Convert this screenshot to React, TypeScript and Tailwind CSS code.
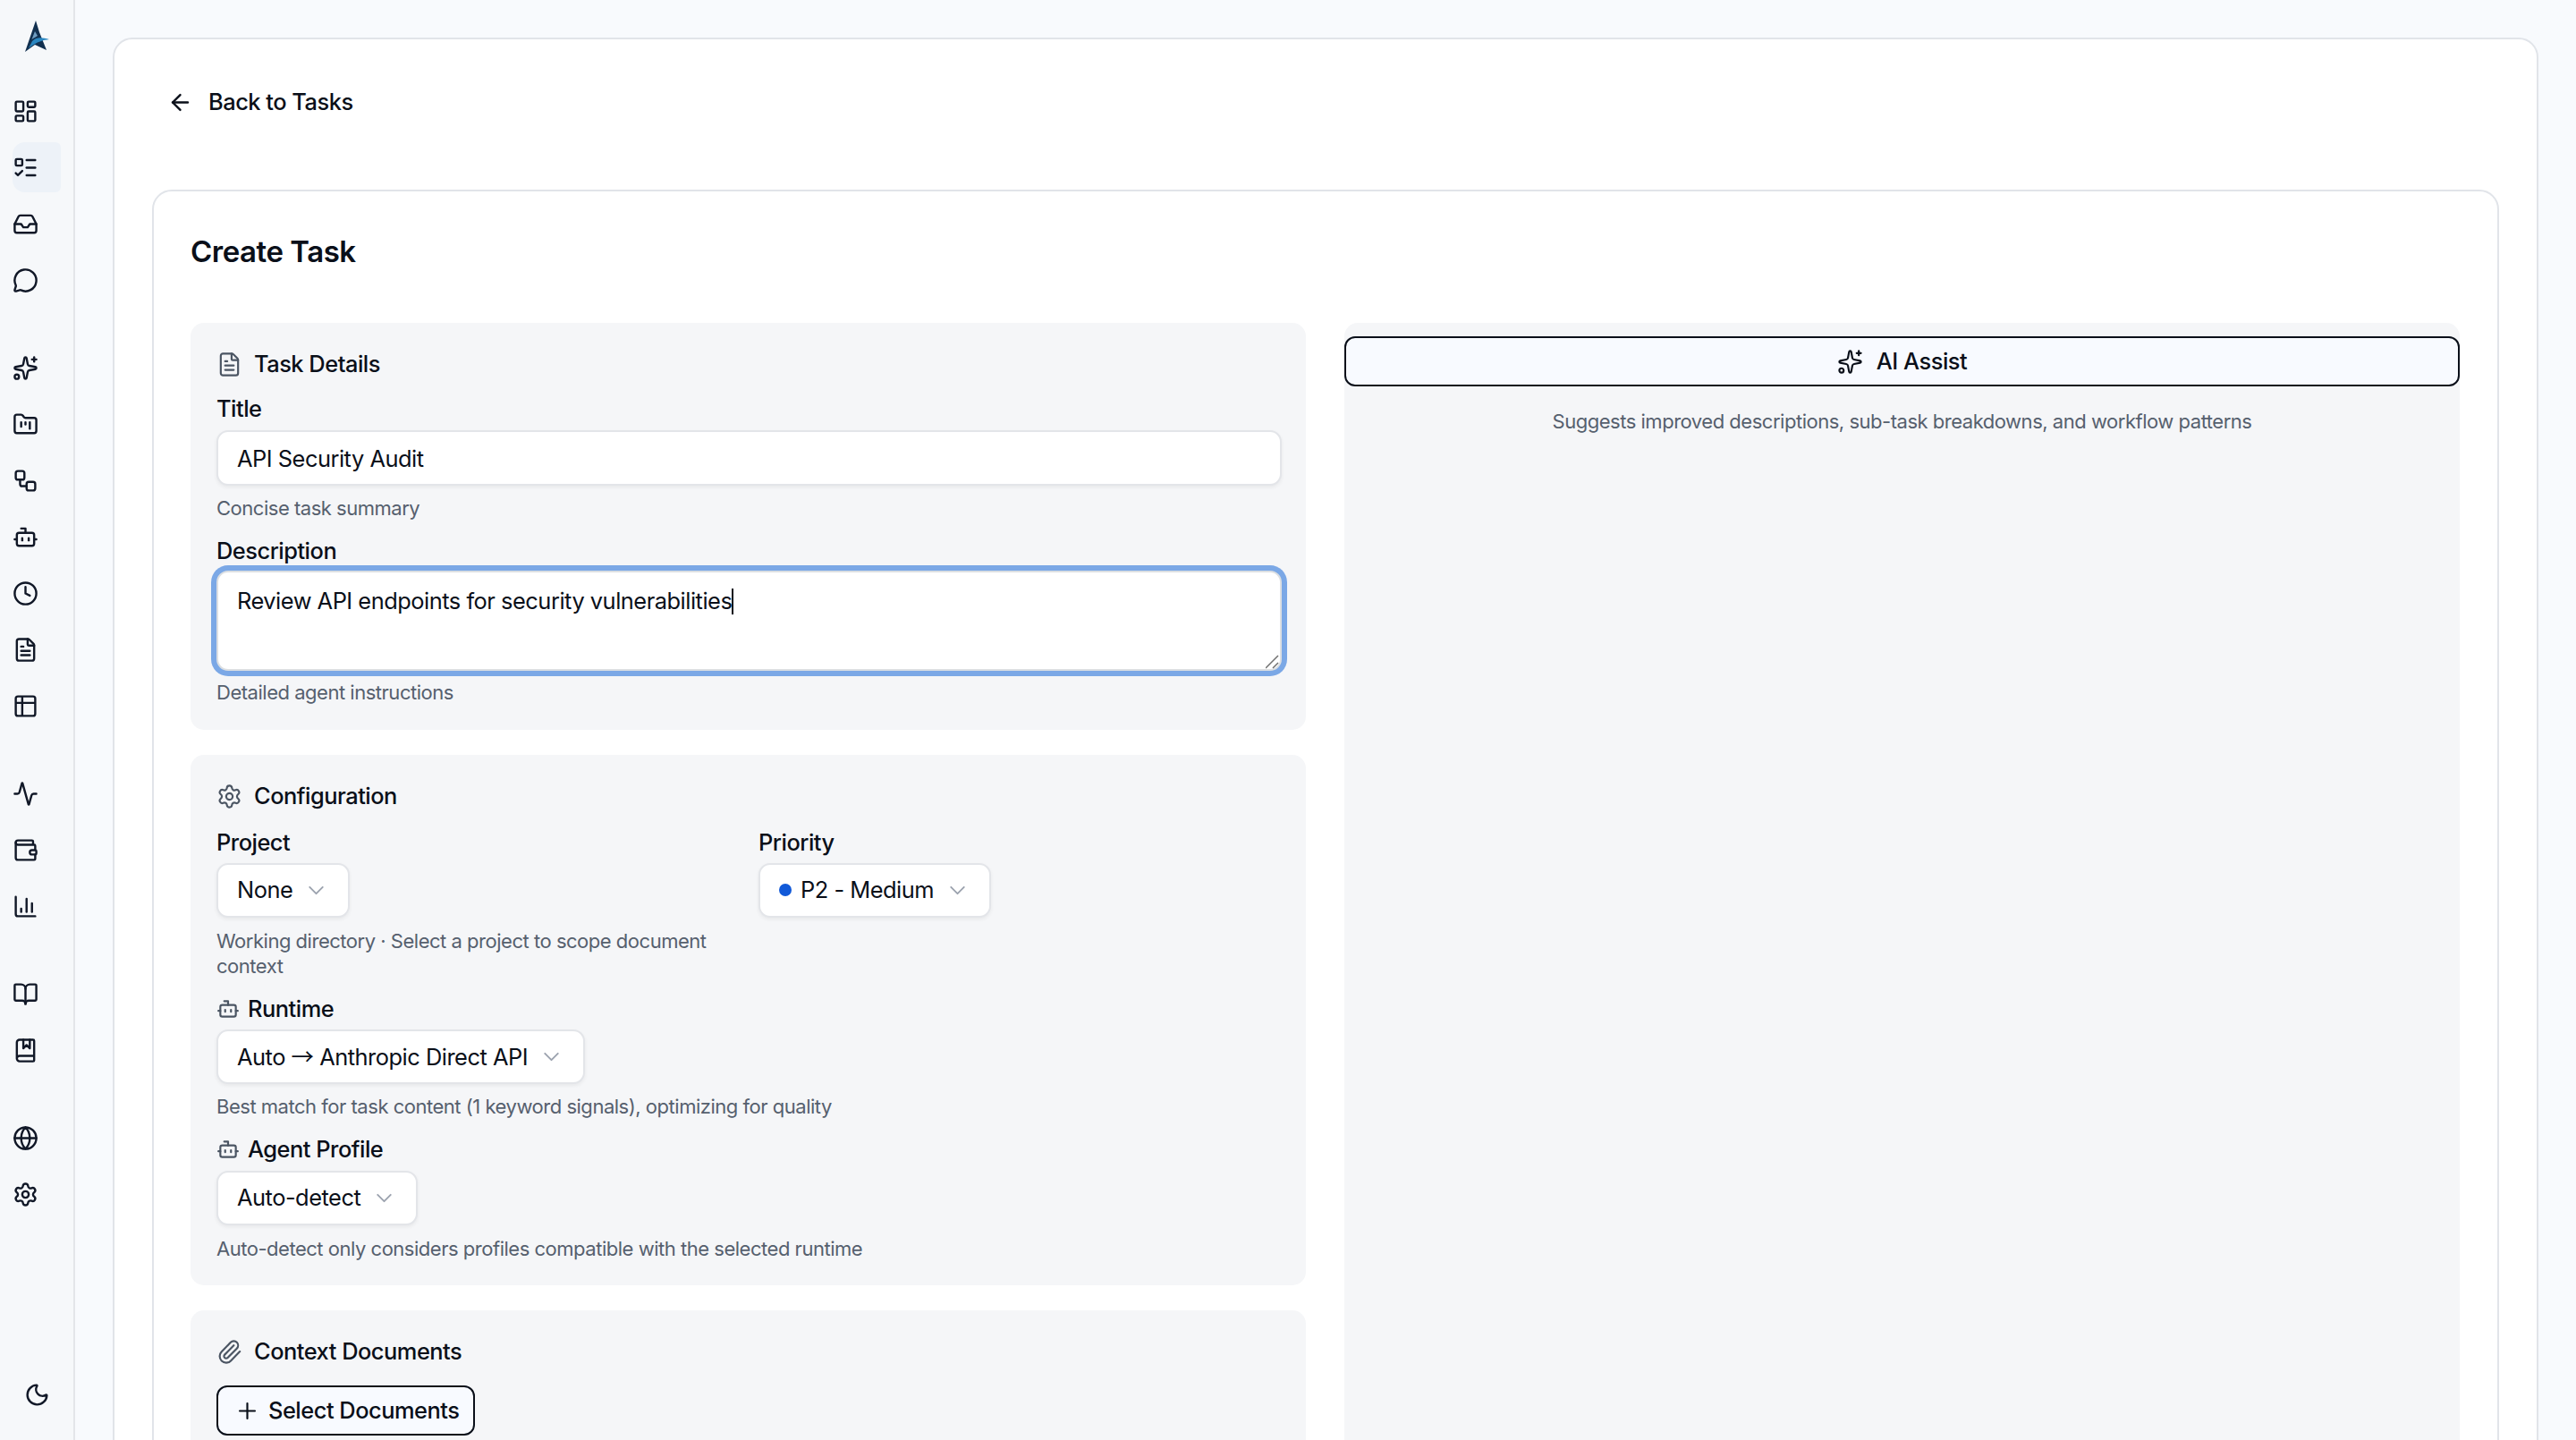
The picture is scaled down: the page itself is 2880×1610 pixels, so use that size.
import React from 'react';
import {
  Activity, ArrowLeft, BookMarked, BookOpen, Bot, ChartColumn, ChevronDown, Clock, FileText, FolderKanban, Globe,
  Inbox, LayoutDashboard, ListTodo, MessageCircle, Moon, Paperclip, Plus, Settings, Sparkles, Table2, Wallet, Workflow,
} from 'lucide-react';

const NAV_GROUPS = [
  [LayoutDashboard, ListTodo, Inbox, MessageCircle],
  [Sparkles, FolderKanban, Workflow, Bot, Clock, FileText, Table2],
  [Activity, Wallet, ChartColumn],
  [BookOpen, BookMarked],
  [Globe, Settings],
];

const Sidebar: React.FC = () => (
  <aside className="w-[84px] shrink-0 h-full bg-[#f6f8fa] border-r-2 border-[#e3e5e9] flex flex-col">
    {/* Logo */}
    <div className="h-[96px] pl-[26px] pt-[22px]">
      <svg width="30" height="38" viewBox="0 0 30 38">
        <path d="M14 1 L2 36 L13 28 L26 34 L18 14 Z" fill="#12304f" />
        <path d="M13 13 L9.5 22 C12 20 15 19 16 18 Z" fill="#6f9cc0" />
        <path d="M10 24 C15 19 21 20 29 22 C22 23 16 24 6 32 Z" fill="#2a86c0" />
      </svg>
    </div>
    <nav className="flex flex-col gap-[42px] pl-[14px]">
      {NAV_GROUPS.map((group, i) => (
        <div key={i} className="flex flex-col gap-[7px]">
          {group.map((Icon, j) => (
            <div
              key={j}
              className={`w-[54px] h-[56px] flex items-center text-[#111827] ${
                Icon === ListTodo ? 'bg-[#edf2f8] rounded-l-[14px] rounded-r-[6px]' : ''
              }`}
            >
              <Icon size={29} />
            </div>
          ))}
        </div>
      ))}
    </nav>
    <div className="mt-auto pl-[27px] pb-[36px] text-[#111827]">
      <Moon size={29} />
    </div>
  </aside>
);

const Heading: React.FC<{ icon: React.ElementType; children: React.ReactNode }> = ({ icon: Icon, children }) => (
  <div className="h-[30px] flex items-center gap-[13px] text-[25.4px] font-medium text-[#0a0f19]">
    <Icon size={29} strokeWidth={1.8} className="text-[#4b5563]" />
    {children}
  </div>
);

const Select: React.FC<{ children: React.ReactNode }> = ({ children }) => (
  <button className="h-[61px] px-[21px] flex items-center gap-[12px] bg-white border-2 border-[#e3e5e9] rounded-[13px] shadow-[0_2px_4px_rgba(0,0,0,0.06)] text-[25.4px] text-[#0a0f19]">
    {children}
    <ChevronDown size={29} strokeWidth={1.6} className="text-[#9ca3af]" />
  </button>
);

const Hint: React.FC<{ children: React.ReactNode; className?: string }> = ({ children, className }) => (
  <p className={`text-[22px] leading-[28px] text-[#56606e] ${className ?? ''}`}>{children}</p>
);

const Label: React.FC<{ children: React.ReactNode; className?: string }> = ({ children, className }) => (
  <div className={`h-[36px] flex items-center text-[25.4px] font-medium text-[#0a0f19] ${className ?? ''}`}>{children}</div>
);

const BotLabel: React.FC<{ children: React.ReactNode; className?: string }> = ({ children, className }) => (
  <Label className={`gap-[9px] ${className ?? ''}`}>
    <Bot size={26} className="text-[#4b5563]" />
    {children}
  </Label>
);

const App: React.FC = () => {
  return (
    <div className="flex h-screen overflow-hidden bg-[#f8fafd] font-[Inter,sans-serif] tracking-[-0.03em]">
      <Sidebar />
      <main className="flex-1 min-w-0 pt-[42px] px-[42px]">
        <div className="bg-white border-2 border-[#e1e4e9] rounded-[22px] px-[42px] pt-[43px] min-h-[1700px]">
          <div className="h-[54px] pl-[17px] flex items-center gap-[17px] text-[25.4px] font-medium text-[#0a0f19]">
            <ArrowLeft size={29} />
            Back to Tasks
          </div>

          <div className="mt-[71px] bg-white border-2 border-[#e1e4e9] rounded-[22px] pl-[41px] pr-[42px] pt-[46px] min-h-[1500px]">
            <h1 className="h-[44px] flex items-center text-[33px] font-semibold text-[#0a0f19]">Create Task</h1>

            <div className="mt-[57px] grid grid-cols-[1247px_1fr] gap-[43px] items-start">
              {/* Left column: the three form sections */}
              <div className="flex flex-col gap-[28px]">
                <section className="bg-[#f5f6f8] rounded-[15px] pl-[29px] pr-[27px] pt-[31px] pb-[28px]">
                  <Heading icon={FileText}>Task Details</Heading>
                  <Label className="mt-[17px]">Title</Label>
                  <input
                    readOnly
                    value="API Security Audit"
                    className="mt-[6px] w-full h-[62px] px-[21px] bg-white border-2 border-[#e3e5e9] rounded-[13px] shadow-[0_2px_4px_rgba(0,0,0,0.06)] text-[25.4px] text-[#0a0f19] outline-none"
                  />
                  <Hint className="mt-[11px]">Concise task summary</Hint>
                  <Label className="mt-[16px]">Description</Label>
                  <div className="relative mt-[4px] h-[112px] px-[21px] pt-[16px] bg-white border-2 border-[#dcdfe2] rounded-[13px] ring-[6px] ring-[#7ba8e6] text-[25.4px] leading-[32px] text-[#0a0f19]">
                    Review API endpoints for security vulnerabilities
                    <span className="inline-block w-[2px] h-[29px] bg-[#0a0f19] align-[-6px]" />
                    <svg className="absolute right-0 bottom-0" width="16" height="16" viewBox="0 0 16 16" stroke="#707070" strokeWidth="1.5">
                      <path d="M0 15 L14 1 M8 15 L14 9" />
                    </svg>
                  </div>
                  <Hint className="mt-[10px]">Detailed agent instructions</Hint>
                </section>

                <section className="bg-[#f5f6f8] rounded-[15px] pl-[29px] pr-[27px] pt-[31px] pb-[27px]">
                  <Heading icon={Settings}>Configuration</Heading>
                  <div className="mt-[19px] grid grid-cols-[577px_1fr] gap-x-[29px]">
                    <div>
                      <Label>Project</Label>
                      <div className="mt-[5px] flex">
                        <Select>None</Select>
                      </div>
                      <Hint className="mt-[12px]">Working directory · Select a project to scope document context</Hint>
                    </div>
                    <div>
                      <Label>Priority</Label>
                      <div className="mt-[5px] flex">
                        <Select>
                          <span className="flex items-center gap-[10px]">
                            <span className="w-[14px] h-[14px] rounded-full bg-[#1159d8]" />
                            P2 - Medium
                          </span>
                        </Select>
                      </div>
                    </div>
                  </div>
                  <BotLabel className="mt-[16px]">Runtime</BotLabel>
                  <div className="mt-[5px] flex">
                    <Select>
                      <span>
                        Auto <span className="font-['Noto_Sans_CJK_SC']">→</span> Anthropic Direct API
                      </span>
                    </Select>
                  </div>
                  <Hint className="mt-[11px]">Best match for task content (1 keyword signals), optimizing for quality</Hint>
                  <BotLabel className="mt-[16px]">Agent Profile</BotLabel>
                  <div className="mt-[6px] flex">
                    <Select>Auto-detect</Select>
                  </div>
                  <Hint className="mt-[12px]">Auto-detect only considers profiles compatible with the selected runtime</Hint>
                </section>

                <section className="bg-[#f5f6f8] rounded-[15px] pl-[29px] pr-[27px] pt-[31px] pb-[28px]">
                  <Heading icon={Paperclip}>Context Documents</Heading>
                  <button className="mt-[23px] h-[56px] pl-[18px] pr-[16px] flex items-center gap-[9px] bg-[#f8faff] border-2 border-[#0a0f19] rounded-[12px] text-[25.4px] font-medium text-[#0a0f19]">
                    <Plus size={29} strokeWidth={1.8} />
                    Select Documents
                  </button>
                </section>
              </div>

              {/* Right column: AI assist panel */}
              <div className="bg-[#f5f6f8] rounded-t-[15px] min-h-[1300px] pt-[15px] text-center">
                <button className="w-full h-[56px] flex items-center justify-center gap-[15px] bg-[#f8faff] border-2 border-[#0a0f19] rounded-[12px] text-[25.4px] font-medium text-[#0a0f19]">
                  <Sparkles size={29} strokeWidth={1.8} />
                  AI Assist
                </button>
                <Hint className="mt-[25px]">Suggests improved descriptions, sub-task breakdowns, and workflow patterns</Hint>
              </div>
            </div>
          </div>
        </div>
      </main>
    </div>
  );
};

export default App;
